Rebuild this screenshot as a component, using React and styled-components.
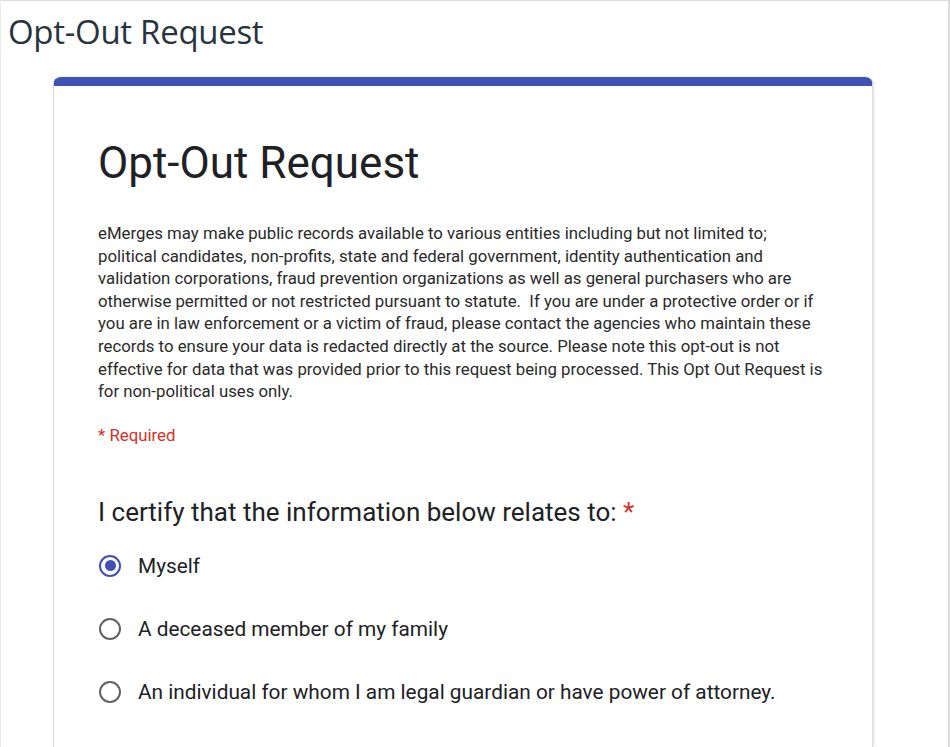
import React, { useState } from "react";
import styled, { createGlobalStyle } from "styled-components";

const GlobalStyle = createGlobalStyle`
  html, body {
    margin: 0;
    padding: 0;
    background: #ffffff;
  }
  body {
    font-family: Roboto, "Liberation Sans", Arial, sans-serif;
  }
`;

const options = [
  "Myself",
  "A deceased member of my family",
  "An individual for whom I am legal guardian or have power of attorney.",
];

const App = () => {
  const [selected, setSelected] = useState(0);

  return (
    <Page>
      <GlobalStyle />
      <PageTitle>Opt-Out Request</PageTitle>
      <Card>
        <FormTitle>Opt-Out Request</FormTitle>
        <Description>
          eMerges may make public records available to various entities including but not limited to;
          <br />
          political candidates, non-profits, state and federal government, identity authentication and
          <br />
          validation corporations, fraud prevention organizations as well as general purchasers who are
          <br />
          otherwise permitted or not restricted pursuant to statute.&nbsp; If you are under a protective order or if
          <br />
          you are in law enforcement or a victim of fraud, please contact the agencies who maintain these
          <br />
          records to ensure your data is redacted directly at the source. Please note this opt-out is not
          <br />
          effective for data that was provided prior to this request being processed. This Opt Out Request is
          <br />
          for non-political uses only.
        </Description>
        <Required>* Required</Required>
        <Question>
          I certify that the information below relates to: <Star>*</Star>
        </Question>
        <OptionList>
          {options.map((label, i) => (
            <Option key={label} onClick={() => setSelected(i)}>
              <Radio $checked={selected === i} />
              <OptionLabel>{label}</OptionLabel>
            </Option>
          ))}
        </OptionList>
      </Card>
    </Page>
  );
};

const Page = styled.div`
  width: 950px;
  height: 747px;
  box-sizing: border-box;
  border-top: 1px solid #dcdcdc;
  border-left: 1px solid #ececec;
  border-right: 2px solid #dcdcdc;
  overflow: hidden;
  display: flex;
  flex-direction: column;
`;

const PageTitle = styled.h1`
  margin: 11px 0 0 7px;
  font-family: "Open Sans", "Liberation Sans", sans-serif;
  font-weight: 400;
  font-size: 33px;
  line-height: 40px;
  color: #27343e;
  letter-spacing: -0.3px;
`;

const Card = styled.div`
  margin: 25px 0 0 52px;
  width: 820px;
  flex: 1;
  box-sizing: border-box;
  border-top: 9px solid #3f51b5;
  border-left: 1px solid #dadce0;
  border-right: 1px solid #dadce0;
  border-radius: 8px 8px 0 0;
  box-shadow: 1px 0 3px rgba(0, 0, 0, 0.12);
  padding: 51px 30px 0 44px;
  display: flex;
  flex-direction: column;
`;

const FormTitle = styled.h2`
  margin: 0;
  font-weight: 400;
  font-size: 44px;
  line-height: 52px;
  color: #202124;
`;

const Description = styled.p`
  margin: 33px 0 0 0;
  font-size: 16.8px;
  line-height: 22.6px;
  color: #2a2a2a;
  white-space: nowrap;
`;

const Required = styled.div`
  margin-top: 22px;
  font-size: 16.8px;
  line-height: 20px;
  color: #d93025;
`;

const Question = styled.div`
  margin-top: 51px;
  font-size: 26px;
  line-height: 32px;
  color: #202124;
`;

const Star = styled.span`
  color: #d93025;
`;

const OptionList = styled.div`
  margin-top: 26px;
  display: flex;
  flex-direction: column;
  gap: 39px;
`;

const Option = styled.label`
  display: flex;
  align-items: center;
  gap: 17px;
  cursor: pointer;
  padding-left: 1px;
`;

const Radio = styled.span`
  width: 22px;
  height: 22px;
  flex-shrink: 0;
  box-sizing: border-box;
  border-radius: 50%;
  border: 2px solid ${(props) => (props.$checked ? "#3f51b5" : "#5f6368")};
  display: flex;
  align-items: center;
  justify-content: center;
  &::after {
    content: "";
    width: 11px;
    height: 11px;
    border-radius: 50%;
    background: #3f51b5;
    display: ${(props) => (props.$checked ? "block" : "none")};
  }
`;

const OptionLabel = styled.span`
  font-size: 20.8px;
  line-height: 24px;
  color: #202124;
`;

export default App;
